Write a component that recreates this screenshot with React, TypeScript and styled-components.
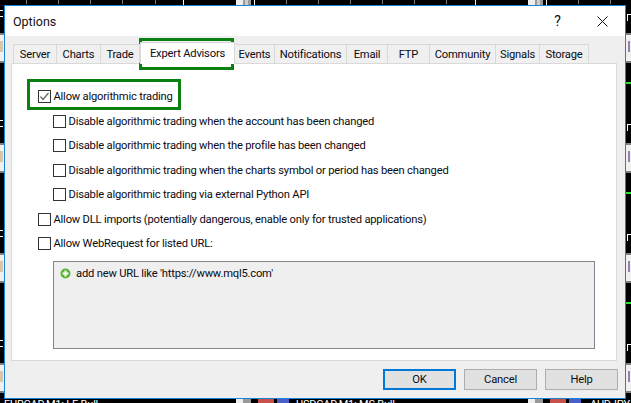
import React from "react";
import styled, { createGlobalStyle } from "styled-components";

const Global = createGlobalStyle`
  html, body { margin: 0; padding: 0; background: #000; }
  body { width: 631px; height: 403px; overflow: hidden; font-family: Roboto, "Open Sans", sans-serif; letter-spacing: -0.2px; }
`;
const Desktop = styled.div`position: relative; width: 631px; height: 403px; background: #000; overflow: hidden;`;
const Backdrop = styled.svg`position: absolute; left: 0; top: 0;`;
const Window = styled.div`
  position: absolute; left: 4px; top: 5px; width: 622px; height: 394px; box-sizing: border-box;
  border: 1px solid #1883d7; background: #efefef; display: flex; flex-direction: column; color: #0b0b14;
`;
const TitleBar = styled.div`height: 30px; background: #fff; display: flex; align-items: center; padding: 0 0 0 8px; flex: none;`;
const Title = styled.div`font-size: 12.5px; flex: 1; color: #111; letter-spacing: 0;`;
const CtrlBtn = styled.div`width: 45px; height: 30px; display: flex; align-items: center; justify-content: center; font-size: 14px;`;
const Body = styled.div`flex: 1; display: flex; flex-direction: column; padding: 9px 8px 0 6px; min-height: 0;`;
const TabRow = styled.div`display: flex; height: 18px; align-items: flex-end; padding-left: 2px; position: relative; z-index: 1;`;
const Tab = styled.div<{ $w: number; $active?: boolean }>`
  width: ${p => p.$w}px; box-sizing: border-box; height: ${p => (p.$active ? 22 : 19)}px; flex: none;
  display: flex; align-items: center; justify-content: center; font-size: 11.2px; white-space: nowrap;
  padding-top: ${p => (p.$active ? 0 : 1)}px;
  background: ${p => (p.$active ? "#fff" : "#f0f0f0")};
  border: 1px solid #d9d9d9; border-left-width: ${p => (p.$active ? 1 : 0)}px; border-bottom-width: 0;
  &:first-child { border-left-width: 1px; }
  margin-bottom: ${p => (p.$active ? -1 : 0)}px;
`;
const Panel = styled.div`
  height: 298px; box-sizing: border-box; background: #fff; border: 1px solid #d9d9d9;
  padding: 26px 0 0 26px; display: flex; flex-direction: column; flex: none;
`;
const Row = styled.label<{ $indent?: boolean }>`
  display: flex; align-items: center; gap: 2.5px; height: 13px; margin-bottom: 11.5px; font-size: 11.2px; white-space: nowrap;
  margin-left: ${p => (p.$indent ? 15 : 0)}px;
`;
const Box = styled.span`width: 13px; height: 13px; box-sizing: border-box; border: 1px solid #333; background: #fff; display: inline-flex; flex: none;`;
const UrlBox = styled.div`
  margin: -0.5px 0 0 15px; width: 542px; height: 88px; box-sizing: border-box; background: #efefef; border: 1px solid #828790;
  padding: 5px 0 0 6px; display: flex; align-items: flex-start; gap: 5px; font-size: 11.2px; flex: none;
`;
const UrlIcon = styled.svg`flex: none; margin-top: 1px;`;
const Footer = styled.div`flex: 1; display: flex; justify-content: flex-end; align-items: flex-start; gap: 8px; padding: 8px 0 0 0; margin-right: -1px;`;
const Button = styled.div<{ $def?: boolean }>`
  width: 73px; height: 21px; box-sizing: border-box; display: flex; align-items: center; justify-content: center;
  background: #e1e1e1; font-size: 11.2px;
  border: ${p => (p.$def ? "2px solid #0078d7" : "1px solid #adadad")};
`;
const Highlight = styled.div<{ $l: number; $t: number; $w: number; $h: number }>`
  position: absolute; left: ${p => p.$l}px; top: ${p => p.$t}px; width: ${p => p.$w}px; height: ${p => p.$h}px;
  box-sizing: border-box; border: 3px solid #0a7f12; pointer-events: none;
`;

const tabs: [string, number, boolean?][] = [
  ["Server", 44], ["Charts", 44], ["Trade", 39], ["Expert Advisors", 95, true], ["Events", 40], ["Notifications", 72],
  ["Email", 41], ["FTP", 42], ["Community", 66], ["Signals", 44], ["Storage", 49],
];
const rows: [string, boolean, boolean][] = [
  ["Allow algorithmic trading", false, true],
  ["Disable algorithmic trading when the account has been changed", true, false],
  ["Disable algorithmic trading when the profile has been changed", true, false],
  ["Disable algorithmic trading when the charts symbol or period has been changed", true, false],
  ["Disable algorithmic trading via external Python API", true, false],
  ["Allow DLL imports (potentially dangerous, enable only for trusted applications)", false, false],
  ["Allow WebRequest for listed URL:", false, false],
];
const grayTicks = [26, 58, 90, 122, 155, 286, 318, 350, 382, 414, 446, 578, 610];
const whiteTicks = [183, 254, 475, 546];
const bands = [33, 143, 253, 363];

export default function App() {
  return (
    <Desktop>
      <Global />
      <Backdrop width="631" height="403">
        {grayTicks.map(x => <rect key={x} x={x} y={0} width={1} height={4} fill="#778" />)}
        {whiteTicks.map(x => <rect key={x} x={x} y={0} width={1} height={5} fill="#fff" />)}
        {[236, 528].map(x => (
          <g key={x}>
            <rect x={x} y={0} width={7} height={5} fill="#eee" />
            <rect x={x + 7} y={0} width={8} height={5} fill="#999" />
            <rect x={x + 9} y={0} width={3} height={5} fill="#ccc" />
          </g>
        ))}
        {bands.map(y => (
          <g key={y}>
            <rect x={0} y={y} width={631} height={29} fill="#f0f0f0" />
            <rect x={0} y={y} width={631} height={2} fill="#808080" />
            <rect x={0} y={y + 28} width={631} height={2} fill="#808080" />
            <rect x={0} y={y + 8} width={3} height={11} fill="#c9a878" opacity={0.6} />
            <rect x={628} y={y + 8} width={2} height={11} fill="#9a7fb0" />
          </g>
        ))}
        {[82, 192, 302].map(y => <rect key={y} x={626} y={y} width={5} height={2} fill="#2be02b" />)}
        {[10, 120, 230, 340].map(y => (
          <g key={y} fill="#fff">
            <rect x={0} y={y} width={3} height={1} />
            <rect x={0} y={y + 6} width={3} height={1} />
            <rect x={627} y={y + 4} width={4} height={1} />
            <rect x={627} y={y + 4} width={1} height={7} />
          </g>
        ))}
        {[236, 528].map(x => (
          <g key={x}>
            <rect x={x} y={399} width={7} height={4} fill="#eee" />
            <rect x={x + 7} y={399} width={8} height={4} fill="#999" />
            <rect x={x + 22} y={399} width={16} height={4} fill="#c8504a" />
            <rect x={x + 41} y={399} width={12} height={4} fill="#4a5fc8" />
          </g>
        ))}
        <g fill="#fff" fontSize="11" fontFamily="Roboto, sans-serif">
          <text x="4" y="407.5">EURCAD,M1: LE Bull</text>
          <text x="296" y="407.5">USDCAD,M1: MS Bull</text>
          <text x="590" y="407.5">AUDJPY</text>
        </g>
      </Backdrop>
      <Window>
        <TitleBar>
          <Title>Options</Title>
          <CtrlBtn>?</CtrlBtn>
          <CtrlBtn>
            <svg width="11" height="11" viewBox="0 0 11 11"><path d="M.5.5L10.5 10.5M10.5.5L.5 10.5" stroke="#111" strokeWidth="1" fill="none" /></svg>
          </CtrlBtn>
        </TitleBar>
        <Body>
          <TabRow>
            {tabs.map(([t, w, a]) => <Tab key={t} $w={w} $active={a}>{t}</Tab>)}
          </TabRow>
          <Panel>
            {rows.map(([t, ind, chk]) => (
              <Row key={t} $indent={ind}>
                <Box>
                  {chk && <svg width="11" height="11" viewBox="0 0 11 11"><path d="M1.5 5.5L4 8.5L9.5 2" stroke="#666" strokeWidth="1.3" fill="none" /></svg>}
                </Box>
                {t}
              </Row>
            ))}
            <UrlBox>
              <UrlIcon width="11" height="11" viewBox="0 0 11 11">
                <circle cx="5.5" cy="5.5" r="5" fill="#5cb531" />
                <path d="M5.5 2.5V8.5M2.5 5.5H8.5" stroke="#fff" strokeWidth="2" />
              </UrlIcon>
              add new URL like 'https://www.mql5.com'
            </UrlBox>
          </Panel>
          <Footer>
            <Button $def>OK</Button>
            <Button>Cancel</Button>
            <Button>Help</Button>
          </Footer>
        </Body>
      </Window>
      <Highlight $l={139} $t={38} $w={95} $h={32} />
      <Highlight $l={27} $t={79} $w={154} $h={31} />
    </Desktop>
  );
}
